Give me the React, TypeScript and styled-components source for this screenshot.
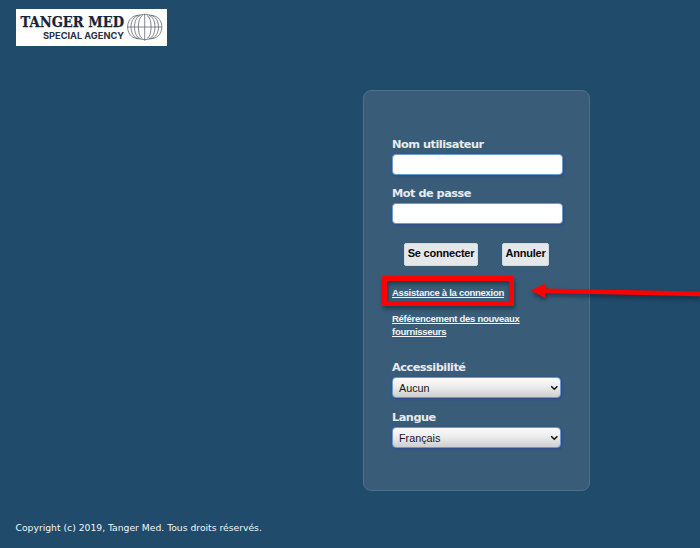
import React from "react";
import styled, { createGlobalStyle } from "styled-components";

const GlobalStyle = createGlobalStyle`
  * { box-sizing: border-box; }
  body { margin: 0; background: #204b6b; overflow: hidden; }
`;

const Page = styled.div`
  position: relative;
  display: flex;
  flex-direction: column;
  width: 700px;
  height: 548px;
  background: #204b6b;
  font-family: "DejaVu Sans", Verdana, sans-serif;
`;

const Header = styled.header`
  height: 90px;
  padding: 9px 0 0 16px;
`;

const Logo = styled.svg`
  display: block;
  width: 151px;
  height: 37px;
  background: #fff;
`;

const Panel = styled.form`
  display: flex;
  flex-direction: column;
  width: 227px;
  height: 401px;
  margin-left: 363px;
  padding: 45px 0 0 28px;
  border: 1px solid #507088;
  border-radius: 8px;
  background: #395d79;
`;

const Field = styled.div<{ $height: number }>`
  height: ${(p) => p.$height}px;
`;

const Label = styled.label`
  display: block;
  height: 18px;
  line-height: 17px;
  font-size: 11.3px;
  font-weight: bold;
  letter-spacing: -0.49px;
  color: #e8ebed;
  white-space: nowrap;
`;

const Input = styled.input`
  display: block;
  width: 171px;
  height: 21px;
  padding: 0 6px;
  border: 1px solid #6b9dcc;
  border-radius: 4px;
  background: #fff;
  outline: none;
  box-shadow: 1px 1px 3px #2e4a92;
`;

const Buttons = styled.div`
  display: flex;
  gap: 24px;
  height: 51px;
  padding: 8px 0 0 12px;
`;

const Button = styled.button<{ $width: number }>`
  width: ${(p) => p.$width}px;
  height: 23px;
  padding: 0 0 2px;
  border: 1px solid #d3dadd;
  border-radius: 2px;
  background: #e4e8eb;
  color: #080808;
  font: bold 11px/19px "Liberation Sans", Arial, sans-serif;
  letter-spacing: -0.2px;
  white-space: nowrap;
`;

const HelpLink = styled.a`
  display: block;
  width: 150px;
  color: #f1f4f6;
  font: bold 9.5px/13px "Liberation Sans", Arial, sans-serif;
  letter-spacing: -0.27px;
  text-decoration: underline;
`;

const Links = styled.div`
  display: flex;
  flex-direction: column;
  gap: 13px;
  height: 73px;
`;

const Select = styled.div`
  display: flex;
  align-items: center;
  justify-content: space-between;
  width: 169px;
  height: 21px;
  padding: 1px 1px 0 6px;
  border: 1px solid #6799ce;
  border-radius: 4px;
  background: linear-gradient(#fafafa, #ededed 45%, #cecece);
  box-shadow: 1px 1px 3px #2e4a92;
  color: #181818;
  font: 10.8px/18px "Liberation Sans", Arial, sans-serif;
`;

const Footer = styled.footer`
  padding: 30px 0 0 15.5px;
  color: #f3f6f8;
  font-size: 9.23px;
  line-height: 14px;
  white-space: nowrap;
`;

const Highlight = styled.div`
  position: absolute;
  left: 382px;
  top: 276px;
  width: 132px;
  height: 30px;
  border: 5px solid #fe0000;
  border-radius: 1px;
  filter: drop-shadow(1px 3px 2px rgba(5, 20, 40, 0.5));
  pointer-events: none;
`;

const Arrow = styled.svg`
  position: absolute;
  left: 525px;
  top: 275px;
  filter: drop-shadow(1px 3px 2px rgba(5, 20, 40, 0.5));
  pointer-events: none;
`;

const Chevron = () => (
  <svg width="9" height="9" viewBox="0 0 9 9" fill="none" stroke="#111" strokeWidth="1.5">
    <path d="M1.2 2.2 4.3 5.3 7.4 2.2" />
  </svg>
);

function AgencyLogo() {
  return (
    <Logo viewBox="0 0 151 37" aria-label="Tanger Med Special Agency">
      <text x="4.5" y="18" fontFamily="DejaVu Serif, serif" fontWeight="bold" fontSize="15" textLength="103.5" lengthAdjust="spacingAndGlyphs" fill="#182335" stroke="#182335" strokeWidth="0.25">TANGER MED</text>
      <text x="27" y="29.5" fontFamily="Inter, sans-serif" fontWeight="bold" fontSize="8.9" textLength="81" lengthAdjust="spacingAndGlyphs" fill="#263145">SPECIAL AGENCY</text>
      <g fill="none" stroke="#59616d" strokeWidth="0.75">
        <path d="M121 6.5C108.5 8 108.5 28 121 29.5M136.4 6.5C149 8 149 28 136.4 29.5" />
        <path d="M122.5 6.5C112.5 8 112.5 28 122.5 29.5M134.9 6.5C145 8 145 28 134.9 29.5" />
        <path d="M124.5 6.5C116.5 8 116.5 28 124.5 29.5M132.9 6.5C141 8 141 28 132.9 29.5" />
        <path d="M126.5 6.5C121 8 121 28 126.5 29.5M130.9 6.5C136.5 8 136.5 28 130.9 29.5" />
        <path d="M128.7 4.8V31.7M111.7 18h34M120.5 6.5q8.2-2.4 16.4 0M120.5 29.5q8.2 2.4 16.4 0" />
      </g>
    </Logo>
  );
}

export default function App() {
  return (
    <>
      <GlobalStyle />
      <Page>
        <Header><AgencyLogo /></Header>
        <Panel>
          <Field $height={49}>
            <Label htmlFor="user">Nom utilisateur</Label>
            <Input id="user" />
          </Field>
          <Field $height={50}>
            <Label htmlFor="password">Mot de passe</Label>
            <Input id="password" type="password" />
          </Field>
          <Buttons>
            <Button type="button" $width={74}>Se connecter</Button>
            <Button type="button" $width={47}>Annuler</Button>
          </Buttons>
          <Links>
            <HelpLink>Assistance à la connexion</HelpLink>
            <HelpLink>Référencement des nouveaux fournisseurs</HelpLink>
          </Links>
          <Field $height={50}>
            <Label>Accessibilité</Label>
            <Select>Aucun<Chevron /></Select>
          </Field>
          <Field $height={50}>
            <Label>Langue</Label>
            <Select>Français<Chevron /></Select>
          </Field>
        </Panel>
        <Footer>Copyright (c) 2019, Tanger Med. Tous droits réservés.</Footer>
        <Highlight />
        <Arrow width="175" height="40" viewBox="0 0 175 40">
          <path d="M5.5 15.5 20.2 8.4V13.4L175 16.6V21.2L20.2 18V23Z" fill="#fe0000" />
        </Arrow>
      </Page>
    </>
  );
}
